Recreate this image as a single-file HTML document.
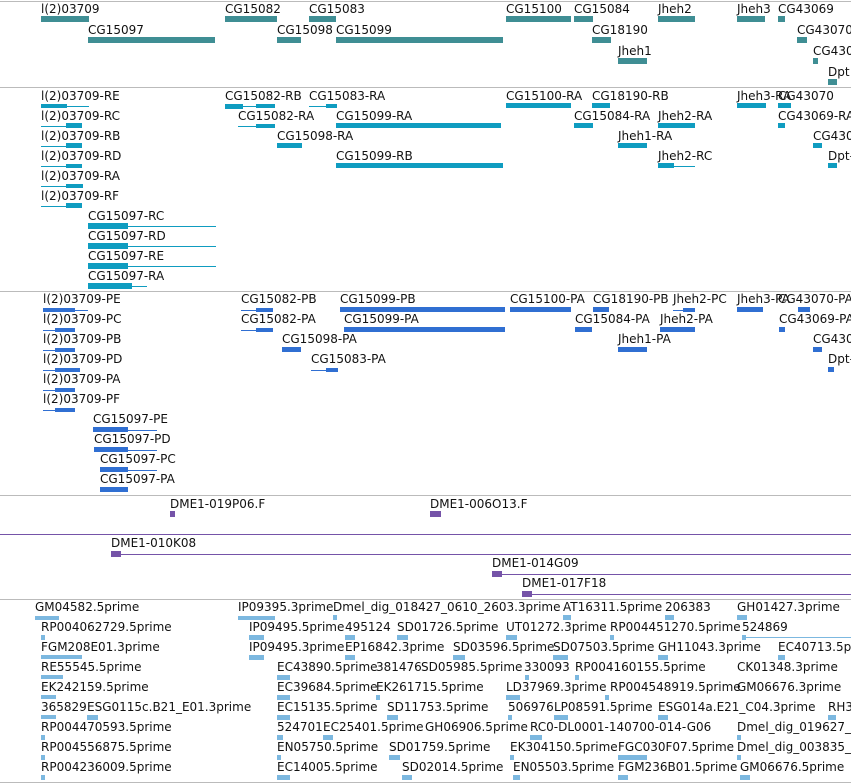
<!DOCTYPE html>
<html style="overflow:hidden;width:851px;height:783px"><head><meta charset="utf-8"><style>
html,body{overflow:hidden}
body{margin:0;width:851px;height:783px;background:#fff;position:relative;overflow:hidden;font-family:"DejaVu Sans","Liberation Sans",sans-serif}
.l{position:absolute;font-size:12px;line-height:14px;white-space:nowrap;color:#111}
.b{position:absolute;height:6px}
.h{position:absolute;height:1px;background:#bbb;left:0;width:851px}
.g{background:#3f8e94}
.t{background:#0f9cc0}
.p{background:#306fd2}
.e{background:#7cb8e0}
.ln{position:absolute;height:1px}
</style></head><body>
<div class="h" style="top:1px"></div>
<div class="h" style="top:87px"></div>
<div class="h" style="top:291px"></div>
<div class="h" style="top:495px"></div>
<div class="h" style="top:599px"></div>
<div class="h" style="top:782px"></div>

<div class="l" style="left:41px;top:2px">l(2)03709</div><div class="b g" style="left:41px;top:16px;width:48px"></div>
<div class="l" style="left:225px;top:2px">CG15082</div><div class="b g" style="left:225px;top:16px;width:52px"></div>
<div class="l" style="left:309px;top:2px">CG15083</div><div class="b g" style="left:309px;top:16px;width:27px"></div>
<div class="l" style="left:506px;top:2px">CG15100</div><div class="b g" style="left:506px;top:16px;width:65px"></div>
<div class="l" style="left:574px;top:2px">CG15084</div><div class="b g" style="left:574px;top:16px;width:19px"></div>
<div class="l" style="left:658px;top:2px">Jheh2</div><div class="b g" style="left:658px;top:16px;width:37px"></div>
<div class="l" style="left:737px;top:2px">Jheh3</div><div class="b g" style="left:737px;top:16px;width:28px"></div>
<div class="l" style="left:778px;top:2px">CG43069</div><div class="b g" style="left:778px;top:16px;width:7px"></div>
<div class="l" style="left:88px;top:23px">CG15097</div><div class="b g" style="left:88px;top:37px;width:127px"></div>
<div class="l" style="left:277px;top:23px">CG15098</div><div class="b g" style="left:277px;top:37px;width:24px"></div>
<div class="l" style="left:336px;top:23px">CG15099</div><div class="b g" style="left:336px;top:37px;width:167px"></div>
<div class="l" style="left:592px;top:23px">CG18190</div><div class="b g" style="left:592px;top:37px;width:19px"></div>
<div class="l" style="left:797px;top:23px">CG43070</div><div class="b g" style="left:797px;top:37px;width:10px"></div>
<div class="l" style="left:618px;top:44px">Jheh1</div><div class="b g" style="left:618px;top:58px;width:29px"></div>
<div class="l" style="left:813px;top:44px">CG43071</div><div class="b g" style="left:813px;top:58px;width:5px"></div>
<div class="l" style="left:828px;top:65px">Dpt</div><div class="b g" style="left:828px;top:79px;width:9px"></div>

<div class="l" style="left:41px;top:89px">l(2)03709-RE</div><div class="ln t" style="left:41px;top:106px;width:48px"></div><div class="b t" style="left:41px;top:104px;width:26px;height:4px"></div>
<div class="l" style="left:225px;top:89px">CG15082-RB</div><div class="ln t" style="left:225px;top:106px;width:50px"></div><div class="b t" style="left:225px;top:104px;width:18px;height:5px"></div><div class="b t" style="left:256px;top:104px;width:19px;height:4px"></div>
<div class="l" style="left:309px;top:89px">CG15083-RA</div><div class="ln t" style="left:309px;top:106px;width:28px"></div><div class="b t" style="left:326px;top:104px;width:11px;height:4px"></div>
<div class="l" style="left:506px;top:89px">CG15100-RA</div><div class="b t" style="left:506px;top:103px;width:65px;height:5px"></div>
<div class="l" style="left:592px;top:89px">CG18190-RB</div><div class="b t" style="left:592px;top:103px;width:18px;height:5px"></div>
<div class="l" style="left:737px;top:89px">Jheh3-RA</div><div class="b t" style="left:737px;top:103px;width:29px;height:5px"></div>
<div class="l" style="left:778px;top:89px">CG43070</div><div class="b t" style="left:778px;top:103px;width:13px;height:5px"></div>

<div class="l" style="left:41px;top:109px">l(2)03709-RC</div><div class="ln t" style="left:41px;top:126px;width:41px"></div><div class="b t" style="left:66px;top:123px;width:16px;height:5px"></div>
<div class="l" style="left:238px;top:109px">CG15082-RA</div><div class="ln t" style="left:238px;top:126px;width:37px"></div><div class="b t" style="left:256px;top:124px;width:19px;height:4px"></div>
<div class="l" style="left:336px;top:109px">CG15099-RA</div><div class="b t" style="left:336px;top:123px;width:165px;height:5px"></div>
<div class="l" style="left:574px;top:109px">CG15084-RA</div><div class="b t" style="left:574px;top:123px;width:19px;height:5px"></div>
<div class="l" style="left:658px;top:109px">Jheh2-RA</div><div class="b t" style="left:658px;top:123px;width:37px;height:5px"></div>
<div class="l" style="left:778px;top:109px">CG43069-RA</div><div class="b t" style="left:778px;top:123px;width:7px;height:5px"></div>

<div class="l" style="left:41px;top:129px">l(2)03709-RB</div><div class="ln t" style="left:41px;top:146px;width:41px"></div><div class="b t" style="left:66px;top:143px;width:16px;height:5px"></div>
<div class="l" style="left:277px;top:129px">CG15098-RA</div><div class="b t" style="left:277px;top:143px;width:25px;height:5px"></div>
<div class="l" style="left:618px;top:129px">Jheh1-RA</div><div class="b t" style="left:618px;top:143px;width:29px;height:5px"></div>
<div class="l" style="left:813px;top:129px">CG43071-RA</div><div class="b t" style="left:813px;top:143px;width:9px;height:5px"></div>

<div class="l" style="left:41px;top:149px">l(2)03709-RD</div><div class="ln t" style="left:41px;top:166px;width:41px"></div><div class="b t" style="left:66px;top:164px;width:16px;height:4px"></div>
<div class="l" style="left:336px;top:149px">CG15099-RB</div><div class="b t" style="left:336px;top:163px;width:167px;height:5px"></div>
<div class="l" style="left:658px;top:149px">Jheh2-RC</div><div class="ln t" style="left:658px;top:166px;width:37px"></div><div class="b t" style="left:658px;top:163px;width:16px;height:5px"></div>
<div class="l" style="left:828px;top:149px">Dpt-RA</div><div class="b t" style="left:828px;top:163px;width:9px;height:5px"></div>

<div class="l" style="left:41px;top:169px">l(2)03709-RA</div><div class="ln t" style="left:41px;top:186px;width:42px"></div><div class="b t" style="left:66px;top:184px;width:17px;height:4px"></div>
<div class="l" style="left:41px;top:189px">l(2)03709-RF</div><div class="ln t" style="left:41px;top:206px;width:41px"></div><div class="b t" style="left:66px;top:203px;width:16px;height:5px"></div>

<div class="l" style="left:88px;top:209px">CG15097-RC</div><div class="ln t" style="left:88px;top:226px;width:128px"></div><div class="b t" style="left:88px;top:223px;width:40px;height:6px"></div>
<div class="l" style="left:88px;top:229px">CG15097-RD</div><div class="ln t" style="left:88px;top:246px;width:128px"></div><div class="b t" style="left:88px;top:243px;width:40px;height:6px"></div>
<div class="l" style="left:88px;top:249px">CG15097-RE</div><div class="ln t" style="left:88px;top:266px;width:128px"></div><div class="b t" style="left:88px;top:263px;width:40px;height:6px"></div>
<div class="l" style="left:88px;top:269px">CG15097-RA</div><div class="ln t" style="left:88px;top:286px;width:59px"></div><div class="b t" style="left:88px;top:283px;width:44px;height:6px"></div>

<div class="l" style="left:43px;top:292px">l(2)03709-PE</div><div class="ln p" style="left:43px;top:310px;width:45px"></div><div class="b p" style="left:43px;top:308px;width:32px;height:4px"></div>
<div class="l" style="left:241px;top:292px">CG15082-PB</div><div class="ln p" style="left:241px;top:310px;width:32px"></div><div class="b p" style="left:256px;top:308px;width:17px;height:4px"></div>
<div class="l" style="left:340px;top:292px">CG15099-PB</div><div class="b p" style="left:340px;top:307px;width:165px;height:5px"></div>
<div class="l" style="left:510px;top:292px">CG15100-PA</div><div class="b p" style="left:510px;top:307px;width:61px;height:5px"></div>
<div class="l" style="left:593px;top:292px">CG18190-PB</div><div class="b p" style="left:593px;top:307px;width:16px;height:5px"></div>
<div class="l" style="left:673px;top:292px">Jheh2-PC</div><div class="ln p" style="left:673px;top:310px;width:22px"></div><div class="b p" style="left:683px;top:308px;width:12px;height:4px"></div>
<div class="l" style="left:737px;top:292px">Jheh3-PA</div><div class="b p" style="left:737px;top:307px;width:26px;height:5px"></div>
<div class="l" style="left:778px;top:292px">CG43070-PA</div><div class="b p" style="left:798px;top:307px;width:12px;height:5px"></div>

<div class="l" style="left:43px;top:312px">l(2)03709-PC</div><div class="ln p" style="left:43px;top:330px;width:32px"></div><div class="b p" style="left:55px;top:328px;width:20px;height:4px"></div>
<div class="l" style="left:241px;top:312px">CG15082-PA</div><div class="ln p" style="left:241px;top:330px;width:32px"></div><div class="b p" style="left:256px;top:328px;width:17px;height:4px"></div>
<div class="l" style="left:344px;top:312px">CG15099-PA</div><div class="b p" style="left:344px;top:327px;width:161px;height:5px"></div>
<div class="l" style="left:575px;top:312px">CG15084-PA</div><div class="b p" style="left:575px;top:327px;width:17px;height:5px"></div>
<div class="l" style="left:660px;top:312px">Jheh2-PA</div><div class="b p" style="left:660px;top:327px;width:35px;height:5px"></div>
<div class="l" style="left:779px;top:312px">CG43069-PA</div><div class="b p" style="left:779px;top:327px;width:6px;height:5px"></div>

<div class="l" style="left:43px;top:332px">l(2)03709-PB</div><div class="ln p" style="left:43px;top:350px;width:32px"></div><div class="b p" style="left:55px;top:348px;width:20px;height:4px"></div>
<div class="l" style="left:282px;top:332px">CG15098-PA</div><div class="b p" style="left:282px;top:347px;width:19px;height:5px"></div>
<div class="l" style="left:618px;top:332px">Jheh1-PA</div><div class="b p" style="left:618px;top:347px;width:29px;height:5px"></div>
<div class="l" style="left:813px;top:332px">CG43071-PA</div><div class="b p" style="left:813px;top:347px;width:9px;height:5px"></div>

<div class="l" style="left:43px;top:352px">l(2)03709-PD</div><div class="ln p" style="left:43px;top:370px;width:37px"></div><div class="b p" style="left:55px;top:368px;width:25px;height:4px"></div>
<div class="l" style="left:311px;top:352px">CG15083-PA</div><div class="ln p" style="left:311px;top:370px;width:27px"></div><div class="b p" style="left:326px;top:368px;width:12px;height:4px"></div>
<div class="l" style="left:828px;top:352px">Dpt-PA</div><div class="b p" style="left:828px;top:367px;width:6px;height:5px"></div>

<div class="l" style="left:43px;top:372px">l(2)03709-PA</div><div class="ln p" style="left:43px;top:390px;width:32px"></div><div class="b p" style="left:55px;top:388px;width:20px;height:4px"></div>
<div class="l" style="left:43px;top:392px">l(2)03709-PF</div><div class="ln p" style="left:43px;top:410px;width:32px"></div><div class="b p" style="left:55px;top:408px;width:20px;height:4px"></div>

<div class="l" style="left:93px;top:412px">CG15097-PE</div><div class="ln p" style="left:93px;top:430px;width:64px"></div><div class="b p" style="left:93px;top:427px;width:35px;height:5px"></div>
<div class="l" style="left:94px;top:432px">CG15097-PD</div><div class="ln p" style="left:94px;top:450px;width:63px"></div><div class="b p" style="left:94px;top:447px;width:34px;height:5px"></div>
<div class="l" style="left:100px;top:452px">CG15097-PC</div><div class="ln p" style="left:100px;top:470px;width:57px"></div><div class="b p" style="left:100px;top:467px;width:28px;height:5px"></div>
<div class="l" style="left:100px;top:472px">CG15097-PA</div><div class="b p" style="left:100px;top:487px;width:28px;height:5px"></div>

<div class="l" style="left:170px;top:497px">DME1-019P06.F</div><div class="b" style="left:170px;top:511px;width:5px;background:#7553a8"></div>
<div class="l" style="left:430px;top:497px">DME1-006O13.F</div><div class="b" style="left:430px;top:511px;width:11px;background:#7553a8"></div>
<div class="ln" style="left:0;top:534px;width:851px;background:#7553a8"></div>
<div class="l" style="left:111px;top:536px">DME1-010K08</div><div class="ln" style="left:111px;top:554px;width:740px;background:#7553a8"></div><div class="b" style="left:111px;top:551px;width:10px;background:#7553a8"></div>
<div class="l" style="left:492px;top:556px">DME1-014G09</div><div class="ln" style="left:492px;top:574px;width:359px;background:#7553a8"></div><div class="b" style="left:492px;top:571px;width:10px;background:#7553a8"></div>
<div class="l" style="left:522px;top:576px">DME1-017F18</div><div class="ln" style="left:522px;top:594px;width:329px;background:#7553a8"></div><div class="b" style="left:522px;top:591px;width:10px;background:#7553a8"></div>

<div class="l" style="left:35px;top:600px">GM04582.5prime</div><div class="b e" style="left:35px;top:616px;width:24px;height:4px"></div>
<div class="l" style="left:238px;top:600px">IP09395.3prime</div><div class="b e" style="left:238px;top:616px;width:37px;height:4px"></div>
<div class="l" style="left:333px;top:600px">Dmel_dig_018427_0610_2603.3prime</div><div class="b e" style="left:333px;top:615px;width:4px;height:5px"></div>
<div class="l" style="left:563px;top:600px">AT16311.5prime</div><div class="b e" style="left:563px;top:615px;width:8px;height:5px"></div>
<div class="l" style="left:665px;top:600px">206383</div><div class="b e" style="left:665px;top:615px;width:9px;height:5px"></div>
<div class="l" style="left:737px;top:600px">GH01427.3prime</div><div class="b e" style="left:737px;top:615px;width:10px;height:5px"></div>

<div class="l" style="left:41px;top:620px">RP004062729.5prime</div><div class="b e" style="left:41px;top:635px;width:4px;height:5px"></div>
<div class="l" style="left:249px;top:620px">IP09495.5prime</div><div class="b e" style="left:249px;top:635px;width:15px;height:5px"></div>
<div class="l" style="left:345px;top:620px">495124</div><div class="b e" style="left:345px;top:635px;width:10px;height:5px"></div>
<div class="l" style="left:397px;top:620px">SD01726.5prime</div><div class="b e" style="left:397px;top:635px;width:11px;height:5px"></div>
<div class="l" style="left:506px;top:620px">UT01272.3prime</div><div class="b e" style="left:506px;top:635px;width:11px;height:5px"></div>
<div class="l" style="left:610px;top:620px">RP004451270.5prime</div><div class="b e" style="left:610px;top:635px;width:4px;height:5px"></div>
<div class="l" style="left:742px;top:620px">524869</div><div class="ln e" style="left:742px;top:637px;width:109px"></div><div class="b e" style="left:742px;top:635px;width:4px;height:5px"></div>

<div class="l" style="left:41px;top:640px">FGM208E01.3prime</div><div class="b e" style="left:41px;top:655px;width:41px;height:4px"></div>
<div class="l" style="left:249px;top:640px">IP09495.3prime</div><div class="b e" style="left:249px;top:655px;width:15px;height:5px"></div>
<div class="l" style="left:345px;top:640px">EP16842.3prime</div><div class="b e" style="left:345px;top:655px;width:10px;height:5px"></div>
<div class="l" style="left:453px;top:640px">SD03596.5prime</div><div class="b e" style="left:453px;top:655px;width:12px;height:5px"></div>
<div class="l" style="left:553px;top:640px">SD07503.5prime</div><div class="b e" style="left:553px;top:655px;width:15px;height:5px"></div>
<div class="l" style="left:658px;top:640px">GH11043.3prime</div><div class="b e" style="left:658px;top:655px;width:10px;height:5px"></div>
<div class="l" style="left:778px;top:640px">EC40713.5prime</div><div class="b e" style="left:778px;top:655px;width:7px;height:5px"></div>

<div class="l" style="left:41px;top:660px">RE55545.5prime</div><div class="b e" style="left:41px;top:675px;width:22px;height:4px"></div>
<div class="l" style="left:277px;top:660px">EC43890.5prime</div><div class="b e" style="left:277px;top:675px;width:13px;height:5px"></div>
<div class="l" style="left:376px;top:660px">381476</div>
<div class="l" style="left:421px;top:660px">SD05985.5prime</div>
<div class="l" style="left:524px;top:660px">330093</div><div class="b e" style="left:525px;top:675px;width:4px;height:5px"></div>
<div class="l" style="left:575px;top:660px">RP004160155.5prime</div><div class="b e" style="left:575px;top:675px;width:4px;height:5px"></div>
<div class="l" style="left:737px;top:660px">CK01348.3prime</div>

<div class="l" style="left:41px;top:680px">EK242159.5prime</div><div class="b e" style="left:41px;top:695px;width:15px;height:4px"></div>
<div class="l" style="left:277px;top:680px">EC39684.5prime</div><div class="b e" style="left:277px;top:695px;width:13px;height:5px"></div>
<div class="l" style="left:376px;top:680px">EK261715.5prime</div><div class="b e" style="left:376px;top:695px;width:4px;height:5px"></div>
<div class="l" style="left:506px;top:680px">LD37969.3prime</div><div class="b e" style="left:506px;top:695px;width:14px;height:5px"></div>
<div class="l" style="left:610px;top:680px">RP004548919.5prime</div><div class="b e" style="left:605px;top:695px;width:4px;height:5px"></div>
<div class="l" style="left:737px;top:680px">GM06676.3prime</div>

<div class="l" style="left:41px;top:700px">365829</div><div class="b e" style="left:41px;top:715px;width:15px;height:4px"></div>
<div class="l" style="left:87px;top:700px">ESG0115c.B21_E01.3prime</div><div class="b e" style="left:87px;top:715px;width:11px;height:5px"></div>
<div class="l" style="left:277px;top:700px">EC15135.5prime</div><div class="b e" style="left:277px;top:715px;width:13px;height:5px"></div>
<div class="l" style="left:387px;top:700px">SD11753.5prime</div><div class="b e" style="left:387px;top:715px;width:11px;height:5px"></div>
<div class="l" style="left:508px;top:700px">506976</div><div class="b e" style="left:508px;top:715px;width:4px;height:5px"></div>
<div class="l" style="left:554px;top:700px">LP08591.5prime</div><div class="b e" style="left:554px;top:715px;width:14px;height:5px"></div>
<div class="l" style="left:658px;top:700px">ESG014a.E21_C04.3prime</div><div class="b e" style="left:658px;top:715px;width:10px;height:5px"></div>
<div class="l" style="left:828px;top:700px">RH3</div><div class="b e" style="left:828px;top:715px;width:8px;height:5px"></div>

<div class="l" style="left:41px;top:720px">RP004470593.5prime</div><div class="b e" style="left:41px;top:735px;width:4px;height:5px"></div>
<div class="l" style="left:277px;top:720px">524701</div><div class="b e" style="left:277px;top:735px;width:6px;height:5px"></div>
<div class="l" style="left:323px;top:720px">EC25401.5prime</div><div class="b e" style="left:323px;top:735px;width:10px;height:5px"></div>
<div class="l" style="left:425px;top:720px">GH06906.5prime</div>
<div class="l" style="left:530px;top:720px">RC0-DL0001-140700-014-G06</div><div class="b e" style="left:530px;top:735px;width:12px;height:5px"></div>
<div class="l" style="left:737px;top:720px">Dmel_dig_019627_</div><div class="b e" style="left:737px;top:735px;width:4px;height:5px"></div>

<div class="l" style="left:41px;top:740px">RP004556875.5prime</div><div class="b e" style="left:41px;top:755px;width:4px;height:5px"></div>
<div class="l" style="left:277px;top:740px">EN05750.5prime</div><div class="b e" style="left:277px;top:755px;width:4px;height:5px"></div>
<div class="l" style="left:389px;top:740px">SD01759.5prime</div><div class="b e" style="left:389px;top:755px;width:11px;height:5px"></div>
<div class="l" style="left:510px;top:740px">EK304150.5prime</div><div class="b e" style="left:510px;top:755px;width:4px;height:5px"></div>
<div class="l" style="left:618px;top:740px">FGC030F07.5prime</div><div class="b e" style="left:618px;top:755px;width:29px;height:5px"></div>
<div class="l" style="left:737px;top:740px">Dmel_dig_003835_</div><div class="b e" style="left:737px;top:755px;width:4px;height:5px"></div>

<div class="l" style="left:41px;top:760px">RP004236009.5prime</div><div class="b e" style="left:41px;top:775px;width:4px;height:5px"></div>
<div class="l" style="left:277px;top:760px">EC14005.5prime</div><div class="b e" style="left:277px;top:775px;width:13px;height:5px"></div>
<div class="l" style="left:402px;top:760px">SD02014.5prime</div><div class="b e" style="left:402px;top:775px;width:10px;height:5px"></div>
<div class="l" style="left:513px;top:760px">EN05503.5prime</div><div class="b e" style="left:513px;top:775px;width:7px;height:5px"></div>
<div class="l" style="left:618px;top:760px">FGM236B01.5prime</div><div class="b e" style="left:618px;top:775px;width:10px;height:5px"></div>
<div class="l" style="left:740px;top:760px">GM06676.5prime</div><div class="b e" style="left:740px;top:775px;width:10px;height:5px"></div>
</body></html>
